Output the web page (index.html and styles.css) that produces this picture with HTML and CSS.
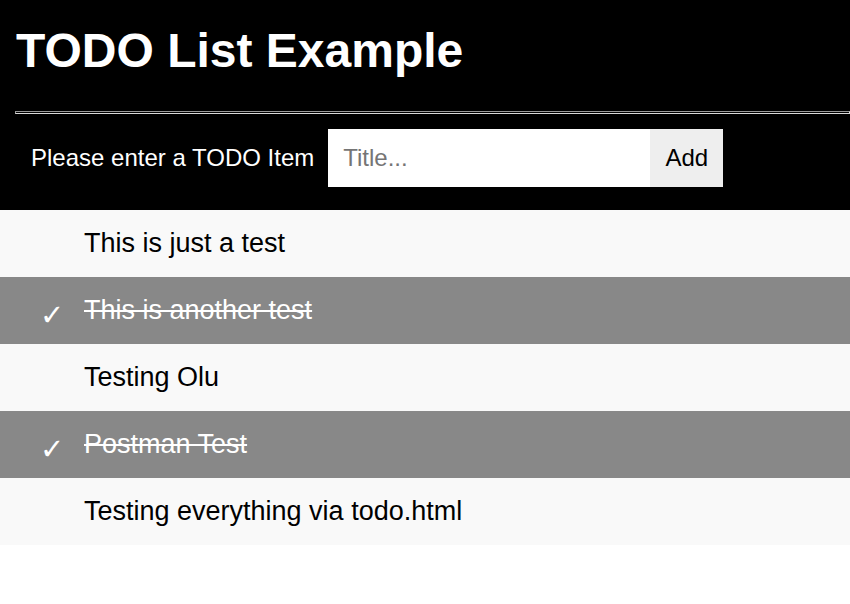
FILE: index.html
```html
<!DOCTYPE html>
<html>
<head>
<meta charset="utf-8">
<link rel="stylesheet" href="styles.css">
</head>
<body>
<div class="header">
  <h1 class="title">TODO List Example</h1>
  <hr class="rule">
  <div class="entry">
    <span class="label">Please enter a TODO Item</span>
    <input class="field" type="text" placeholder="Title...">
    <span class="add">Add</span>
  </div>
</div>
<ul class="list">
  <li class="item">This is just a test</li>
  <li class="item checked">This is another test</li>
  <li class="item">Testing Olu</li>
  <li class="item checked">Postman Test</li>
  <li class="item">Testing everything via todo.html</li>
</ul>
</body>
</html>
```
FILE: styles.css
```css
html, body {
  margin: 0;
  padding: 0;
  background: #fff;
  font-family: "Liberation Sans", Arial, sans-serif;
}
.header {
  background: #000;
  color: #fff;
  padding: 23px 0 23px 15px;
}
.title {
  margin: 0 0 0 1px;
  font-size: 48px;
  font-weight: bold;
  line-height: 55px;
}
.rule {
  margin: 33px 0 15px 0;
  height: 1px;
  border: 1px solid;
  border-color: #9a9a9a #d8d8d8 #d8d8d8 #9a9a9a;
  background: #000;
}
.entry {
  display: flex;
  align-items: center;
  padding-left: 16px;
}
.label {
  font-size: 24px;
  margin-right: 14px;
}
.field {
  width: 322px;
  height: 58px;
  box-sizing: border-box;
  border: none;
  outline: none;
  margin: 0;
  padding: 0 15px;
  font-family: "Liberation Sans", Arial, sans-serif;
  font-size: 24px;
  color: #000;
}
.field::placeholder {
  color: #757575;
}
.add {
  width: 73px;
  height: 58px;
  background: #eee;
  color: #000;
  font-size: 24px;
  display: flex;
  align-items: center;
  justify-content: center;
}
.list {
  list-style: none;
  margin: 0;
  padding: 0;
}
.item {
  position: relative;
  height: 67px;
  box-sizing: border-box;
  padding-left: 84px;
  display: flex;
  align-items: center;
  background: #f9f9f9;
  color: #000;
  font-size: 27px;
}
.checked {
  background: #888;
  color: #fff;
  text-decoration: line-through;
}
.checked::before {
  content: "\2713";
  position: absolute;
  left: 40px;
  top: 24px;
  font-family: "DejaVu Sans", sans-serif;
  font-size: 29px;
  line-height: 1;
  text-decoration: none;
}
```
